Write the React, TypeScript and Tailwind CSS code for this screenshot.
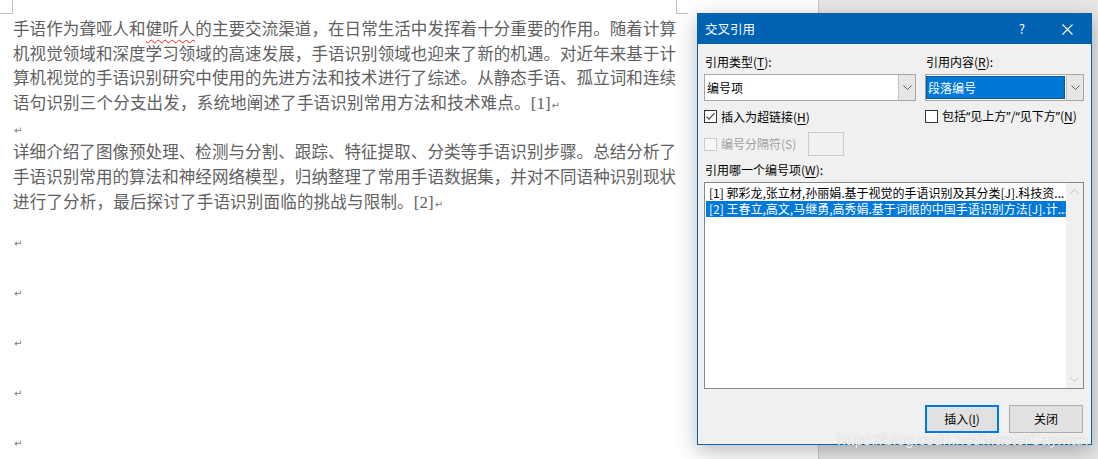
const cjk = "font-['Noto_Sans_CJK_SC',sans-serif]"

function Mark() {
  return <span className="ml-[1px] font-['DejaVu_Sans',sans-serif] text-[10px] leading-none text-[#7a7a7a]">↵</span>
}

function Line({ children, last }: { children: React.ReactNode; last?: boolean }) {
  return <div className={'h-[24.7px] ' + (last ? '' : 'text-justify [text-align-last:justify]')}>{children}</div>
}

function Ref({ n }: { n: number }) {
  return <span className="font-['Liberation_Serif',serif] text-[17px] leading-none">[{n}]</span>
}

function Chevron({ color = '#606060', up = false }: { color?: string; up?: boolean }) {
  return (
    <svg width="9" height="5" viewBox="0 0 9 5" className={up ? 'rotate-180' : ''}>
      <polyline points="0.5,0.5 4.5,4.5 8.5,0.5" fill="none" stroke={color} strokeWidth="1" />
    </svg>
  )
}

function Key({ k }: { k: string }) {
  return (
    <>
      (<span className="underline underline-offset-[2px]">{k}</span>)
    </>
  )
}

function Q({ c }: { c: string }) {
  return <span className="font-['Noto_Sans',sans-serif]">{c}</span>
}

function Combo({ children }: { children: React.ReactNode }) {
  return (
    <div className="h-[27px] flex border border-[#a6a6a6] bg-white">
      <div className="flex-1 flex min-w-0">{children}</div>
      <div className="w-[17px] bg-[#e6e6e6] border-l border-[#c4c4c4] flex items-center justify-center">
        <Chevron />
      </div>
    </div>
  )
}

function CheckBox({ checked, disabled }: { checked?: boolean; disabled?: boolean }) {
  return (
    <div
      className={
        'w-[13px] h-[13px] shrink-0 border flex items-center justify-center ' +
        (disabled ? 'border-[#cccccc] bg-[#f7f7f7]' : 'border-[#333333] bg-white')
      }
    >
      {checked && (
        <svg width="11" height="11" viewBox="0 0 11 11">
          <polyline points="1.5,5.5 4,8.2 9.5,2" fill="none" stroke="#333" strokeWidth="1.1" />
        </svg>
      )}
    </div>
  )
}

function Dialog() {
  return (
    <div className={`absolute left-[697px] top-[13px] w-[395px] h-[432px] border border-[#0063b1] bg-[#f0f0f0] shadow-[0_6px_20px_rgba(0,0,0,0.28)] flex flex-col text-[12px] text-black ${cjk}`}>
      {/* 标题栏 */}
      <div className="h-[30px] shrink-0 bg-[#0063b1] text-white flex items-center pl-[7px] pr-[18px]">
        <span className="flex-1 text-[12.5px]">交叉引用</span>
        <span className="text-[13px] mr-[37px]">?</span>
        <svg width="11" height="11" viewBox="0 0 11 11">
          <path d="M0.5 0.5 L10.5 10.5 M10.5 0.5 L0.5 10.5" stroke="white" strokeWidth="1.1" />
        </svg>
      </div>

      <div className="flex-1 pl-[6px] pr-[7px] flex flex-col">
        <div className="grid grid-cols-[212px_159px] gap-x-[9px] mt-[10px]">
          <div className="h-[16px] leading-[16px] pl-[1px]">
            引用类型<Key k="T" />:
          </div>
          <div className="h-[16px] leading-[16px] pl-[1px]">
            引用内容<Key k="R" />:
          </div>
          <div className="mt-[4px]">
            <Combo>
              <div className="flex items-center pl-[2px]">编号项</div>
            </Combo>
          </div>
          <div className="mt-[4px]">
            <Combo>
              <div className="flex-1 my-[1px] mr-[1px] bg-[#0078d7] border border-dotted border-[#20334a] text-white flex items-center pl-[1px]">
                段落编号
              </div>
            </Combo>
          </div>
          <div className="mt-[9px] flex items-center gap-[4px] h-[13px]">
            <CheckBox checked />
            <span>
              插入为超链接<Key k="H" />
            </span>
          </div>
          <div className="mt-[9px] flex items-center gap-[4px] h-[13px]">
            <CheckBox />
            <span className="whitespace-nowrap">
              包括<Q c="“" />见上方<Q c="”" />/<Q c="“" />见下方<Q c="”" />
              <Key k="N" />
            </span>
          </div>
        </div>

        <div className="mt-[9px] h-[24px] flex items-center">
          <CheckBox disabled />
          <span className="ml-[4px] w-[87px] text-[#a0a0a0]">编号分隔符(S)</span>
          <div className="w-[36px] h-[24px] border border-[#cccccc] bg-[#f0f0f0]" />
        </div>

        <div className="mt-[6px] h-[16px] leading-[16px] pl-[1px]">
          引用哪一个编号项<Key k="W" />:
        </div>

        <div className="mt-[4px] h-[207px] border border-[#828790] bg-white flex">
          <div className="flex-1 min-w-0 pt-[2px] pl-[1px]">
            <div className="h-[16px] leading-[16px] pl-[3px] whitespace-nowrap overflow-hidden">
              [1] 郭彩龙,张立材,孙丽娟.基于视觉的手语识别及其分类[J].科技资...
            </div>
            <div className="h-[16px] leading-[16px] pl-[3px] whitespace-nowrap overflow-hidden bg-[#0078d7] text-white">
              [2] 王春立,高文,马继勇,高秀娟.基于词根的中国手语识别方法[J].计...
            </div>
          </div>
          <div className="w-[17px] bg-[#f0f0f0] flex flex-col justify-between">
            <div className="h-[17px] flex items-center justify-center">
              <Chevron color="#c2c2c2" up />
            </div>
            <div className="h-[17px] flex items-center justify-center">
              <Chevron color="#c2c2c2" />
            </div>
          </div>
        </div>

        <div className="mt-[16px] flex justify-end gap-[10px] pr-[1px]">
          <div className="w-[74px] h-[28px] border-2 border-[#0078d7] bg-[#e1e1e1] flex items-center justify-center">
            插入<Key k="I" />
          </div>
          <div className="w-[74px] h-[28px] border border-[#adadad] bg-[#e1e1e1] flex items-center justify-center">
            关闭
          </div>
        </div>
      </div>
    </div>
  )
}

export default function App() {
  return (
    <div className="relative w-[1098px] h-[459px] overflow-hidden flex bg-[#e7e7e7]">
      {/* 文档页面 */}
      <div className={`w-[819px] h-full bg-white border-r border-[#c8c8c8] ${cjk} text-[#606060]`}>
        <div className="h-[14px] flex">
          <div className="w-[13px] h-[14px] border-r border-b border-[#bfbfbf]" />
          <div className="w-[663px]" />
          <div className="w-[12px] h-[14px] border-l border-b border-[#bfbfbf]" />
        </div>
        <div className="ml-[13px] w-[663px] mt-[2px] text-[16.5px] leading-[24.7px]">
          <Line>
            手语作为聋哑人和
            <span className="underline decoration-wavy decoration-[#e02020] decoration-1 underline-offset-[4px]">健听人</span>
            的主要交流渠道，在日常生活中发挥着十分重要的作用。随着计算
          </Line>
          <Line>机视觉领域和深度学习领域的高速发展，手语识别领域也迎来了新的机遇。对近年来基于计</Line>
          <Line>算机视觉的手语识别研究中使用的先进方法和技术进行了综述。从静态手语、孤立词和连续</Line>
          <Line last>
            <span className="tracking-[0.2px]">语句识别三个分支出发，系统地阐述了手语识别常用方法和技术难点。</span>
            <Ref n={1} />
            <Mark />
          </Line>
          <Line last>
            <Mark />
          </Line>
          <Line>详细介绍了图像预处理、检测与分割、跟踪、特征提取、分类等手语识别步骤。总结分析了</Line>
          <Line>手语识别常用的算法和神经网络模型，归纳整理了常用手语数据集，并对不同语种识别现状</Line>
          <Line last>
            <span className="tracking-[0.2px]">进行了分析，最后探讨了手语识别面临的挑战与限制。</span>
            <Ref n={2} />
            <Mark />
          </Line>
          {[0, 1, 2, 3, 4].map((i) => (
            <div key={i} className="h-[50px] pt-[14px]">
              <div className="h-[24.7px]">
                <Mark />
              </div>
            </div>
          ))}
        </div>
      </div>
      <div className="flex-1" />

      <Dialog />

      {/* 水印 */}
      <div className="absolute left-[837px] top-[431px] font-['Liberation_Sans',sans-serif] text-[15.7px] leading-[18px] text-[rgba(255,255,255,0.9)] [text-shadow:0_0_1px_rgba(0,0,0,0.28)] whitespace-nowrap">
        https://blog.csdn.net/MasterCayman
      </div>
    </div>
  )
}
